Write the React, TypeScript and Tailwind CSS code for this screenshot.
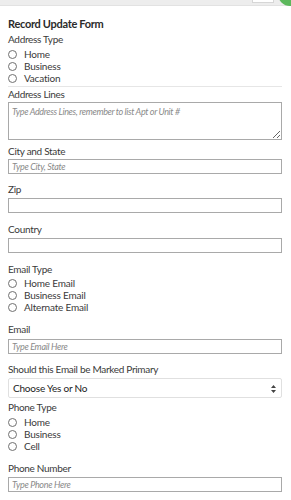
import type { ReactNode } from 'react';

const font = { fontFamily: 'Lato, "Open Sans", sans-serif' };

function Label({ children, className = '' }: { children: ReactNode; className?: string }) {
  return (
    <div className={`h-[14px] text-[10px] leading-[14px] tracking-[-0.3px] text-[#3a3a3a] ${className}`}>{children}</div>
  );
}

function RadioList({ name, options, className = '' }: { name: string; options: string[]; className?: string }) {
  return (
    <div className={`flex flex-col ${className}`}>
      {options.map((opt) => (
        <label key={opt} className="flex h-[12px] items-center gap-[7px] text-[10px] tracking-[-0.2px] text-[#3a3a3a]">
          <input
            type="radio"
            name={name}
            className="m-0 h-[9px] w-[9px] appearance-none rounded-full border border-[#707070] bg-white"
          />
          <span className="leading-[12px]">{opt}</span>
        </label>
      ))}
    </div>
  );
}

function TextInput({ placeholder, className = '' }: { placeholder?: string; className?: string }) {
  return (
    <input
      type="text"
      placeholder={placeholder}
      className={`block h-[15px] w-full border border-[#a9a9a9] px-[3px] text-[9px] italic leading-[13px] tracking-[-0.3px] text-[#333] outline-none placeholder:text-[#8a8a8a] ${className}`}
    />
  );
}

export default function App() {
  return (
    <div className="min-h-[500px] w-[291px] bg-white" style={font}>
      <div className="relative h-[6px] border-b border-[#e2e2e2] bg-[#ededed]">
        <div className="absolute left-[252px] top-0 h-[3px] w-[22px] border-x border-b border-[#d6d6d6] bg-white" />
        <div className="absolute left-[278px] top-[-18px] h-[24px] w-[24px] rounded-full bg-[#5cb85c]" />
      </div>

      <form className="pl-2 pr-[9px]">
        <div className="mt-[11px] h-[14px] text-[11px] font-bold leading-[14px] tracking-[-0.3px] text-[#2b2b2b]">
          Record Update Form
        </div>
        <Label className="mt-[1px]">Address Type</Label>
        <RadioList name="addressType" options={['Home', 'Business', 'Vacation']} className="mt-[2px]" />
        <div className="mt-[2px] border-t border-[#e6e6e6]" />

        <Label>Address Lines</Label>
        <textarea
          placeholder="Type Address Lines, remember to list Apt or Unit #"
          className="mt-[1px] block h-[38px] w-full resize-y border border-[#a9a9a9] px-[3px] py-[2px] text-[9px] italic leading-[13px] tracking-[-0.35px] text-[#333] outline-none placeholder:text-[#8a8a8a]"
        />

        <Label className="mt-[4px]">City and State</Label>
        <TextInput placeholder="Type City, State" className="mt-[1px]" />

        <Label className="mt-[8px]">Zip</Label>
        <TextInput className="mt-[2px]" />

        <Label className="mt-[9px]">Country</Label>
        <TextInput className="mt-[2px]" />

        <Label className="mt-[9px]">Email Type</Label>
        <RadioList name="emailType" options={['Home Email', 'Business Email', 'Alternate Email']} className="mt-[1px]" />

        <Label className="mt-[9px]">Email</Label>
        <TextInput placeholder="Type Email Here" className="mt-[3px]" />

        <Label className="mt-[8px]">Should this Email be Marked Primary</Label>
        <div className="relative mt-[2px] flex h-[20px] items-center rounded-[2px] border border-[#e0e0e0] bg-white pl-[4px] text-[10px] tracking-[-0.2px] text-[#222]">
          <span>Choose Yes or No</span>
          <svg className="absolute right-[5px] top-[6px]" width="5" height="8" viewBox="0 0 5 8">
            <path d="M2.5 0 L5 3 H0 Z M0 5 H5 L2.5 8 Z" fill="#444" />
          </svg>
        </div>

        <Label className="mt-[2px]">Phone Type</Label>
        <RadioList name="phoneType" options={['Home', 'Business', 'Cell']} className="mt-[2px]" />

        <Label className="mt-[9px]">Phone Number</Label>
        <TextInput placeholder="Type Phone Here" className="mt-[2px]" />
      </form>
    </div>
  );
}
